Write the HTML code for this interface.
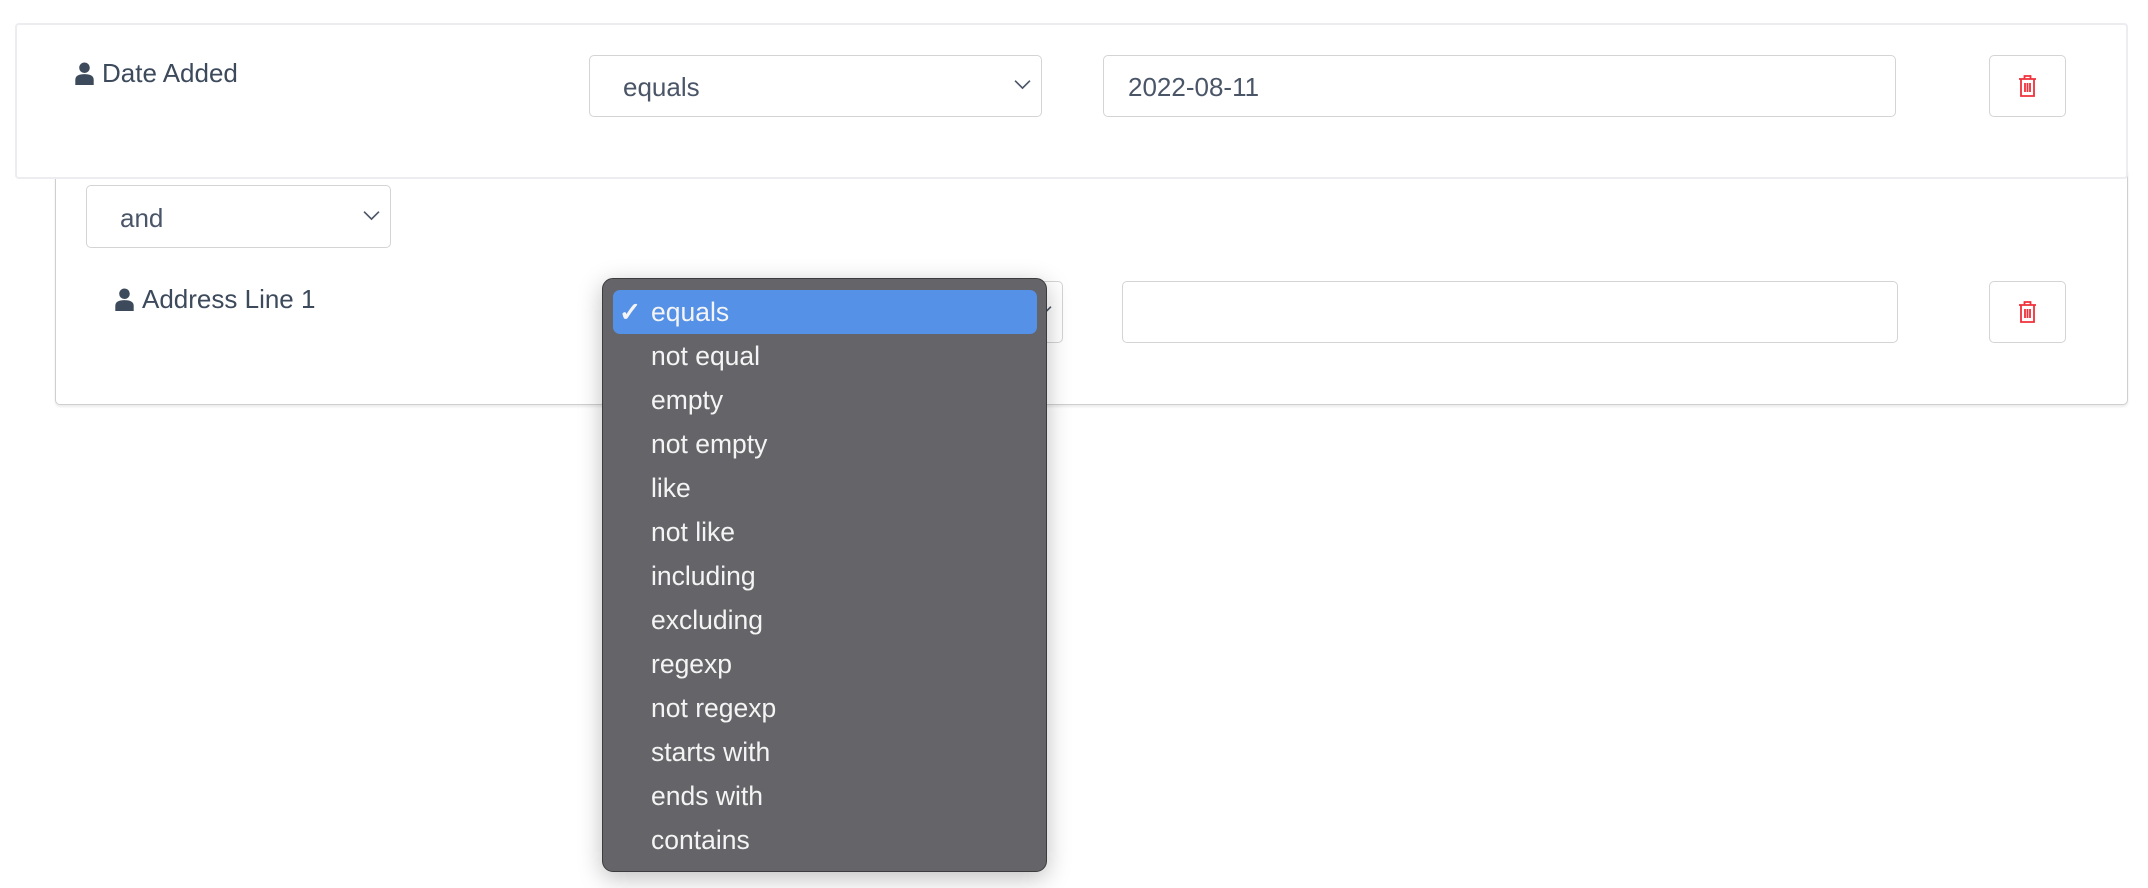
<!DOCTYPE html>
<html><head><meta charset="utf-8"><style>
*{box-sizing:border-box;margin:0;padding:0}
body{width:2148px;height:888px;background:#fff;position:relative;overflow:hidden;font-family:"Liberation Sans",sans-serif;color:#3d4a5c}
.abs{position:absolute}
.card{left:15px;top:23px;width:2113px;height:156px;border:2px solid #ececf1;border-radius:4px;background:#fff;z-index:2}
.outer{left:55px;top:170px;width:2073px;height:235px;border:1.5px solid #cfcfcf;border-top:none;border-radius:0 0 5px 5px;box-shadow:0 2px 2px rgba(0,0,0,.08);background:#fff}
.box{border:1.5px solid #d4d4d4;border-radius:5px;background:#fff}
.sel span{position:absolute;left:33px;top:50%;transform:translateY(-45%);font-size:26px;color:#4a5568}
.chev{position:absolute;right:10px;top:50%;transform:translateY(-60%)}
.lbl{font-size:26px;display:flex;align-items:center}
.trash{display:flex;align-items:center;justify-content:center}
.dd{left:602px;top:278px;width:445px;height:594px;background:#656569;border:1.5px solid #3c3c3e;border-radius:11px;box-shadow:0 6px 24px rgba(0,0,0,.25);z-index:5;font-size:26.5px;color:#f4f4f4}
.it{position:absolute;left:48px;height:44px;line-height:44px}
.hl{position:absolute;left:10px;top:11px;width:424px;height:44px;background:#5591e6;border-radius:7px}
</style></head><body>
<svg width="0" height="0" style="position:absolute"><defs>
<symbol id="user" viewBox="0 0 16 20"><circle cx="8" cy="5" r="4.6" fill="#3d4a5c"/><path d="M0 20V15.5C0 12 3 10.5 8 10.5S16 12 16 15.5V20Z" fill="#3d4a5c"/></symbol>
<symbol id="tr" viewBox="0 0 20 24"><g fill="none" stroke="#f0303a" stroke-width="1.8"><path d="M1.5 5H18.5"/><path d="M7 5V2H13V5"/><path d="M3.5 5V22H16.5V5"/><path d="M7.5 9V18M10 9V18M12.5 9V18"/></g></symbol>
<symbol id="ch" viewBox="0 0 16 10"><path d="M1 1L8 8L15 1" fill="none" stroke="#4a5568" stroke-width="1.5"/></symbol>
</defs></svg>

<div class="abs outer"></div>
<div class="abs card"></div>

<div class="abs lbl" style="left:75px;top:58px;z-index:3"><svg width="19" height="23" style="margin-right:8px"><use href="#user"/></svg>Date Added</div>
<div class="abs box sel" style="left:589px;top:55px;width:453px;height:62px;z-index:3"><span>equals</span><svg class="chev" width="17" height="11"><use href="#ch"/></svg></div>
<div class="abs box" style="left:1103px;top:55px;width:793px;height:62px;z-index:3"><span style="position:absolute;left:24px;top:50%;transform:translateY(-45%);font-size:26px;color:#4a5568">2022-08-11</span></div>
<div class="abs box trash" style="left:1989px;top:55px;width:77px;height:62px;z-index:3"><svg width="21" height="24"><use href="#tr"/></svg></div>

<div class="abs box sel" style="left:86px;top:185px;width:305px;height:63px"><span>and</span><svg class="chev" width="17" height="11"><use href="#ch"/></svg></div>
<div class="abs lbl" style="left:115px;top:284px"><svg width="19" height="23" style="margin-right:8px"><use href="#user"/></svg>Address Line 1</div>
<div class="abs box sel" style="left:603px;top:281px;width:460px;height:62px"><svg class="chev" width="17" height="11"><use href="#ch"/></svg></div>
<div class="abs box" style="left:1122px;top:281px;width:776px;height:62px"></div>
<div class="abs box trash" style="left:1989px;top:281px;width:77px;height:62px"><svg width="21" height="24"><use href="#tr"/></svg></div>

<div class="abs dd">
<div class="hl"></div>
<div class="it" style="left:16px;top:11px;font-weight:bold">✓</div>
<div class="it" style="top:11px">equals</div>
<div class="it" style="top:55px">not equal</div>
<div class="it" style="top:99px">empty</div>
<div class="it" style="top:143px">not empty</div>
<div class="it" style="top:187px">like</div>
<div class="it" style="top:231px">not like</div>
<div class="it" style="top:275px">including</div>
<div class="it" style="top:319px">excluding</div>
<div class="it" style="top:363px">regexp</div>
<div class="it" style="top:407px">not regexp</div>
<div class="it" style="top:451px">starts with</div>
<div class="it" style="top:495px">ends with</div>
<div class="it" style="top:539px">contains</div>
</div>
</body></html>
